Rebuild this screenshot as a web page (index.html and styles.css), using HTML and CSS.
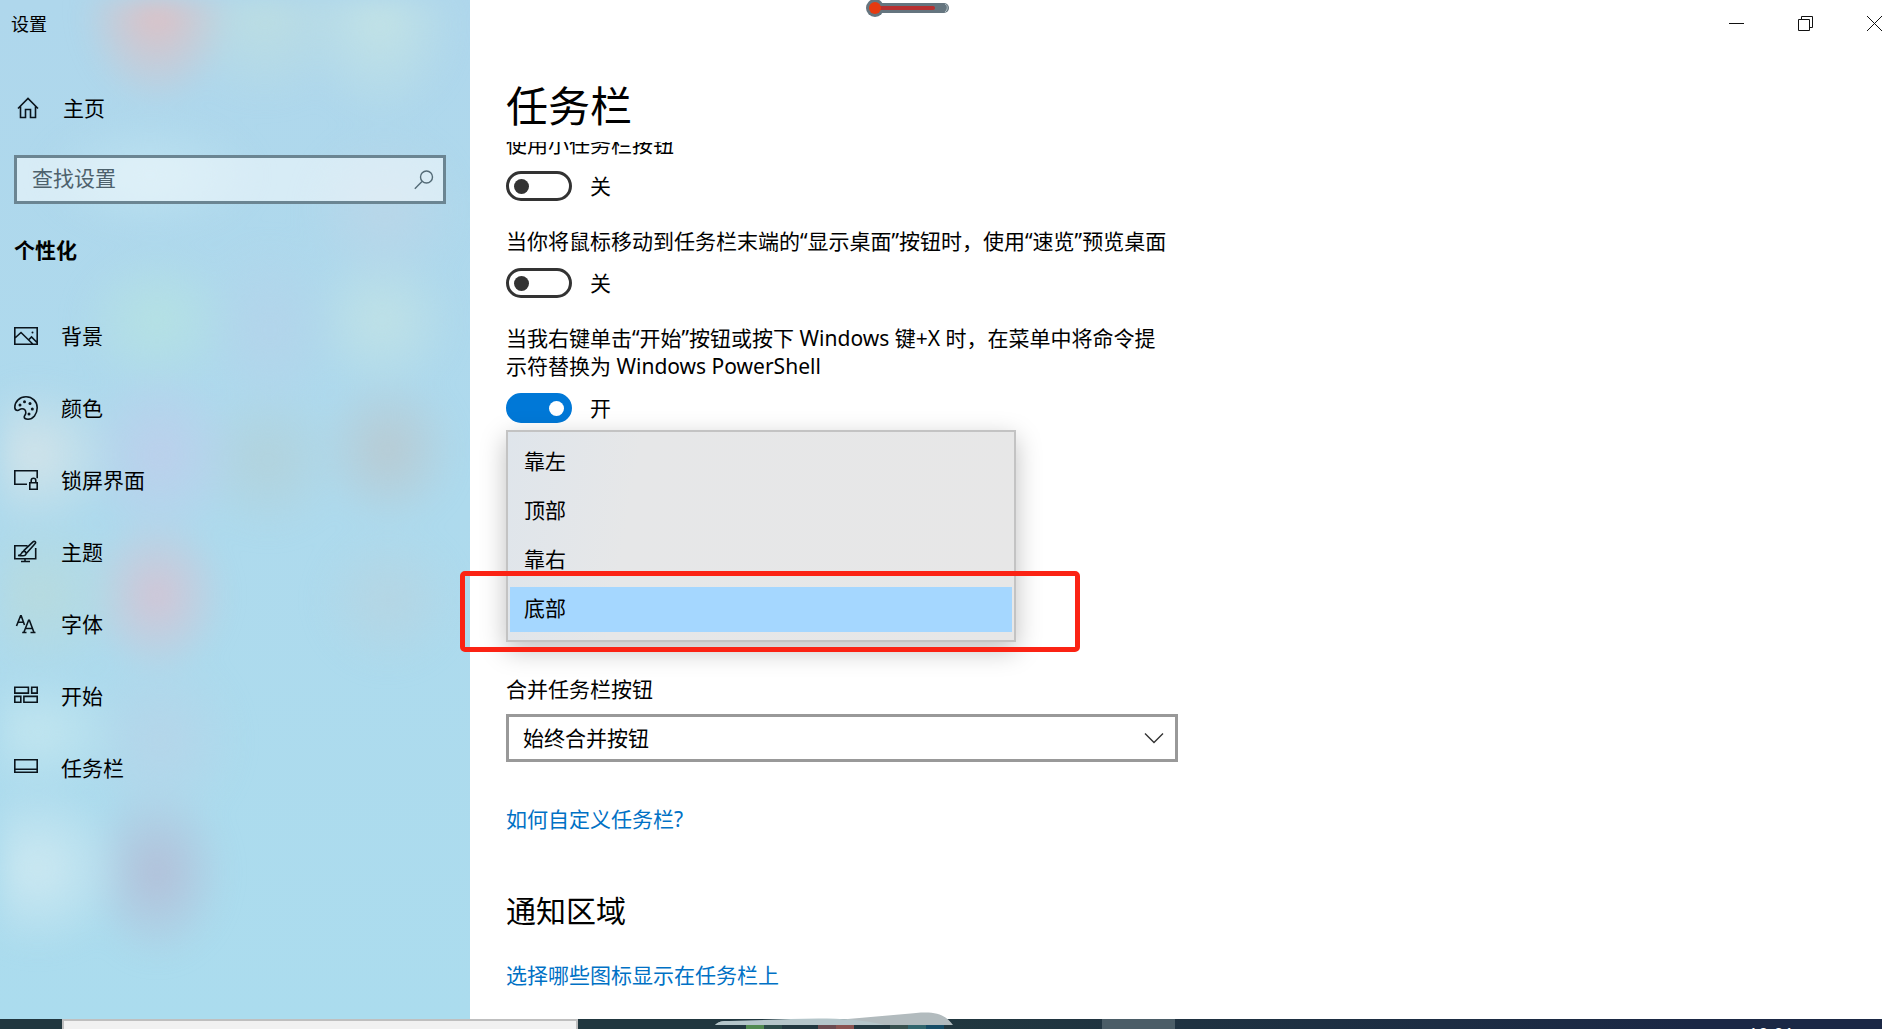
FILE: index.html
```html
<!DOCTYPE html>
<html lang="zh-CN">
  <head>
    <meta charset="UTF-8" />
    <meta name="viewport" content="width=device-width, initial-scale=1.0" />
    <title>设置</title>
    <link rel="stylesheet" href="styles.css">
  </head>
  <body>
    <div class="window">
      <aside class="sidebar">
        <div class="app-title">设置</div>
        <a class="home" href="#">
          <svg width="22" height="22" viewBox="0 0 22 22"><path d="M1 11.5 11 1.5l10 10M3.5 9.5v11h5v-8h5v8h5v-11" /></svg>
          主页
        </a>

        <div class="search">
          <input type="text" placeholder="查找设置" aria-label="查找设置" />
          <svg class="search-icon" width="20" height="20" viewBox="0 0 20 20"><circle cx="12.5" cy="7" r="6" /><path d="M8 11.5.8 18.8" /></svg>
        </div>

        <h2>个性化</h2>

        <nav class="nav">
          <a href="#">
            <svg width="24" height="24" viewBox="0 0 24 24"><path d="M.8 3.8h22.4v16.4H.8zM1 14l6-5.5 12 11.7M14.5 16l3-3 5.5 5.5" /><circle class="dot" cx="18.5" cy="8.5" r="1" /></svg>
            背景
          </a>
          <a href="#">
            <svg width="24" height="24" viewBox="0 0 24 24"><path d="M12 .8c6.300 0 11.200 4.700 11.200 11 0 6.500-4.200 11.400-9.200 11.400-2.200 0-3.800-.8-3.800-2.200 0-1.500 1.600-2.200 1.600-4.300 0-2.400-1.500-3.900-3.800-3.900-2.300 0-2.600 1.700-4.400 1.700-1.800 0-2.800-1.300-2.800-3.200C.8 5.500 5.700.8 12 .8z" /><circle class="dot" cx="6" cy="9" r="1.500" /><circle class="dot" cx="10.500" cy="5.800" r="1.500" /><circle class="dot" cx="16" cy="7.500" r="1.500" /><circle class="dot" cx="18.300" cy="13" r="1.500" /><circle class="dot" cx="15" cy="18" r="1.500" /></svg>
            颜色
          </a>
          <a href="#">
            <svg width="24" height="24" viewBox="0 0 24 24"><path d="M13 16.200H.8V2.800h22.400v7.500M15.800 14.800h7.400v6.400h-7.400zM17.200 14.800v-2.300c0-3 4.600-3 4.600 0v2.300" /></svg>
            锁屏界面
          </a>
          <a href="#">
            <svg width="24" height="24" viewBox="0 0 24 24"><path d="M13.500 5.800H.8v12.900h20.900V8M11 18.700V21M7 21.500h9M4 15.500c3 0 3-1 4-3 1-1.800 3.500-1.300 4 .3.400 2-1.200 3-3.500 2.900-1.500 0-2.500 0-4.500-.2zM9.500 10.800l9.500-9c1.500-1.400 3.300.3 2.200 1.800l-8.700 9.700" /></svg>
            主题
          </a>
          <a href="#">
            <svg width="24" height="24" viewBox="0 0 24 24"><path d="M2.500 14 6.600 3.800h.6L10.500 13M4 10.200h5.400M8.200 20.500h4.300M16.500 20.500h5M9.800 20.500l4.800-12.200h.8l4.600 12.200M11.500 16.500h6.700" /></svg>
            字体
          </a>
          <a href="#">
            <svg width="24" height="24" viewBox="0 0 24 24"><path d="M.8 3.200h13.600v5.900H.8zM17.700 3.200h5.500v5.900h-5.500zM.8 12.400h6v5.900h-6zM9.900 12.400h13.300v5.900H9.900z" /></svg>
            开始
          </a>
          <a href="#">
            <svg width="24" height="24" viewBox="0 0 24 24"><path d="M.8 3.800h22.400v12.400H.8zM1 13.200h22" /></svg>
            任务栏
          </a>
        </nav>
      </aside>

      <main class="main">
        <header class="page-header">
          <div class="window-controls">
            <button type="button" aria-label="最小化"><svg width="15" height="15" viewBox="0 0 15 15"><path d="M0 7.500h15" /></svg></button>
            <button type="button" aria-label="还原"><svg width="15" height="15" viewBox="0 0 15 15"><path d="M.5 3.500h11v11H.5zM3.500 3.500v-3h11v11h-3" /></svg></button>
            <button type="button" aria-label="关闭"><svg width="15" height="15" viewBox="0 0 15 15"><path d="m0 0 15 15M15 0 0 15" /></svg></button>
          </div>
          <h1>任务栏</h1>
        </header>

        <div class="content">
          <div class="setting">
            <label for="small-buttons">使用小任务栏按钮</label>
            <div class="toggle-row"><input type="checkbox" class="toggle" id="small-buttons" /><span>关</span></div>
          </div>
          <div class="setting">
            <label for="peek">当你将鼠标移动到任务栏末端的“显示桌面”按钮时，使用“速览”预览桌面</label>
            <div class="toggle-row"><input type="checkbox" class="toggle" id="peek" /><span>关</span></div>
          </div>
          <div class="setting">
            <label for="powershell">当我右键单击“开始”按钮或按下 Windows 键+X 时，在菜单中将命令提示符替换为 Windows PowerShell</label>
            <div class="toggle-row"><input type="checkbox" class="toggle" id="powershell" checked /><span>开</span></div>
          </div>

          <div class="position-menu" role="listbox">
            <button type="button" role="option">靠左</button>
            <button type="button" role="option">顶部</button>
            <button type="button" role="option">靠右</button>
            <button type="button" role="option" class="selected" aria-selected="true">底部</button>
            <div class="highlight"></div>
          </div>

          <label class="combine-label" for="combine">合并任务栏按钮</label>
          <div class="select-wrap">
            <select id="combine">
              <option>始终合并按钮</option>
            </select>
            <svg class="chevron" width="20" height="12" viewBox="0 0 20 12"><path d="m1 1.500 9 9 9-9" /></svg>
          </div>

          <a class="link" href="#">如何自定义任务栏?</a>
          <h2>通知区域</h2>
          <a class="link" href="#">选择哪些图标显示在任务栏上</a>
        </div>
      </main>
    </div>

    <footer class="taskbar">
      <div class="taskbar-search"></div>
      <div class="taskbar-apps">
        <i class="app green"></i>
        <i class="app red"></i>
        <i class="app teal"></i>
      </div>
      <div class="taskbar-active"></div>
      <time class="clock">10:01</time>
    </footer>

    <!-- desktop widgets floating over everything -->
    <svg class="thermometer" width="84" height="18" viewBox="0 0 84 18">
      <rect x="8" y="3" width="75" height="10" rx="5" fill="#65757f" />
      <circle cx="9" cy="8" r="9" fill="#65757f" />
      <path d="M10 6h57a2 2 0 0 1 0 4H10z" fill="#b83030" />
      <circle cx="9" cy="8" r="6" fill="#e63a10" />
      <path d="M79 4c3 1 3 6 0 8" fill="none" stroke="#b5c4c8" />
    </svg>
    <svg class="swoosh" width="238" height="13" viewBox="0 0 238 13">
      <path d="M0 13c4-4 8-4 14-4h96l80-7c25-3 38-3 48 11z" fill="#b2bbbe" />
      <path d="M0 13c4-4 8-4 14-4 60-1 110-7 156 4z" fill="#b5c6ca" />
    </svg>
  </body>
</html>
```
FILE: styles.css
```css
* {
  box-sizing: border-box;
}
body {
  margin: 0;
  height: 100vh;
  display: flex;
  flex-direction: column;
  overflow: hidden;
  position: relative;
  font-family: "Noto Sans", "Noto Sans CJK SC", sans-serif;
  font-size: 21px;
  line-height: 28px;
  color: #000;
  background-color: #fff;
}
h1,
h2 {
  margin: 0;
}
a {
  color: inherit;
  text-decoration: none;
}
button,
input,
select {
  font: inherit;
  color: inherit;
}
svg {
  flex: none;
}
.window {
  flex: 1;
  min-height: 0;
  display: flex;
}

/* Sidebar */
.sidebar {
  position: relative;
  z-index: 0;
  width: 470px;
  flex: none;
  padding: 10px 24px 0 14px;
  overflow: hidden;
  background: linear-gradient(#afd7ec, #aedaed 50%, #abdcee);
}
/* acrylic: desktop icons blurred behind the panel */
.sidebar::before {
  content: "";
  position: absolute;
  z-index: -1;
  inset: 0;
  filter: blur(12px);
  background:
    radial-gradient(ellipse 75px 95px at 157px 10px, #e0bfc2, #e0bfc200),
    radial-gradient(ellipse 90px 90px at 265px 15px, #bcdde2, #bcdde200),
    radial-gradient(ellipse 80px 100px at 380px 20px, #c2e2e5, #c2e2e500),
    radial-gradient(ellipse 110px 60px at 150px 175px, #bce1f0, #bce1f000),
    radial-gradient(ellipse 80px 80px at 385px 210px, #b9d6e8, #b9d6e800),
    radial-gradient(ellipse 80px 70px at 157px 320px, #b5e1e3, #b5e1e300),
    radial-gradient(ellipse 70px 90px at 270px 330px, #b3d4ea, #b3d4ea00),
    radial-gradient(ellipse 75px 75px at 382px 320px, #bfe1e6, #bfe1e600),
    radial-gradient(ellipse 85px 75px at 35px 455px, #d1e3e9, #d1e3e900),
    radial-gradient(ellipse 80px 90px at 160px 455px, #bccfeb, #bccfeb00),
    radial-gradient(ellipse 75px 75px at 268px 460px, #b2d2dc, #b2d2dc00),
    radial-gradient(ellipse 70px 75px at 388px 450px, #b8cad2, #b8cad200),
    radial-gradient(ellipse 90px 80px at 40px 595px, #b7dade, #b7dade00),
    radial-gradient(ellipse 70px 80px at 157px 595px, #d3c4d4, #d3c4d400),
    radial-gradient(ellipse 70px 70px at 388px 600px, #b5d5e3, #b5d5e300),
    radial-gradient(ellipse 90px 60px at 38px 732px, #c1e5ef, #c1e5ef00),
    radial-gradient(ellipse 80px 90px at 160px 740px, #b5d5e9, #b5d5e900),
    radial-gradient(ellipse 90px 85px at 38px 868px, #cce8f1, #cce8f100),
    radial-gradient(ellipse 70px 90px at 157px 872px, #b3bfd8, #b3bfd800);
}
.app-title {
  font-size: 18px;
  margin-left: -3px;
}
.home {
  display: flex;
  align-items: center;
  gap: 24px;
  height: 48px;
  margin: 46px 0 23px 3px;
}
.sidebar svg {
  fill: none;
  stroke: #0a141c;
  stroke-width: 1.6;
}
.sidebar .dot {
  fill: #0a141c;
  stroke: none;
}
.search {
  position: relative;
}
.search input {
  display: block;
  width: 100%;
  height: 49px;
  padding: 0 50px 4px 15px;
  border: 3px solid #6b8592;
  border-radius: 0;
  background-color: rgba(255, 255, 255, 0.5);
  outline: none;
}
.search input::placeholder {
  color: #4d616c;
  opacity: 1;
}
.search .search-icon {
  position: absolute;
  right: 12px;
  top: 15px;
  stroke: #536a76;
  stroke-width: 1.4;
}
.sidebar h2 {
  margin-top: 32px;
  font-size: 21px;
  line-height: 28px;
}
.nav {
  margin-top: 36px;
}
.nav a {
  display: flex;
  align-items: center;
  gap: 23px;
  height: 72px;
}

/* Main page */
.main {
  flex: 1;
  min-width: 0;
  position: relative;
  z-index: 1;
}
.page-header {
  position: relative;
  z-index: 1;
  height: 142px;
  padding-left: 36px;
  background-color: #fff;
}
.window-controls {
  display: flex;
  justify-content: flex-end;
  height: 47px;
  margin-right: -27px;
}
.window-controls button {
  display: flex;
  align-items: center;
  justify-content: center;
  width: 69px;
  padding: 0;
  border: none;
  background: none;
}
.window-controls svg {
  fill: none;
  stroke: #111;
}
h1 {
  margin-top: 31px;
  font-size: 42px;
  font-weight: 400;
  line-height: 56px;
}
.content {
  max-width: 708px;
  margin-top: -12px;
  padding-left: 36px;
}
.setting {
  margin-bottom: 26px;
}
.setting label {
  display: block;
  max-width: 668px;
}
.toggle-row {
  display: flex;
  align-items: center;
  gap: 18px;
  height: 30px;
  margin-top: 13px;
}
.toggle {
  appearance: none;
  display: flex;
  align-items: center;
  width: 66px;
  height: 30px;
  margin: 0;
  padding: 0 5px;
  border: 3px solid #333;
  border-radius: 15px;
}
.toggle::before {
  content: "";
  width: 15px;
  height: 15px;
  border-radius: 50%;
  background-color: #333;
}
.toggle:checked {
  justify-content: flex-end;
  border-color: #0078d7;
  background-color: #0078d7;
}
.toggle:checked::before {
  background-color: #fff;
}

.position-menu {
  position: relative;
  display: flex;
  flex-direction: column;
  gap: 4px;
  width: 510px;
  margin-top: -19px;
  padding: 8px 2px;
  border: 2px solid #c3c3c3;
  background: linear-gradient(100deg, #dfe5eb, #e6e7e8 25%, #e7e7e7);
  box-shadow: 0 8px 24px rgba(0, 0, 0, 0.25);
}
.position-menu button {
  height: 45px;
  padding: 0 14px 3px;
  border: none;
  background: none;
  text-align: left;
}
.position-menu .selected {
  background-color: #a5d7ff;
}
.highlight {
  position: absolute;
  left: -48px;
  right: -66px;
  bottom: -12px;
  height: 81px;
  border: 5px solid #fb2314;
  border-radius: 5px;
}

.combine-label {
  display: block;
  margin-top: 33px;
}
.select-wrap {
  position: relative;
  margin-top: 11px;
}
.select-wrap select {
  appearance: none;
  display: block;
  width: 100%;
  height: 48px;
  padding: 0 48px 0 14px;
  border: 3px solid #999;
  border-radius: 0;
  background-color: #fff;
}
.chevron {
  position: absolute;
  right: 14px;
  top: 18px;
  fill: none;
  stroke: #333;
  stroke-width: 1.4;
  pointer-events: none;
}
.link {
  display: block;
  margin-top: 43px;
  color: #0071c5;
}
.content h2 {
  margin-top: 58px;
  font-size: 30px;
  font-weight: 400;
  line-height: 40px;
}
.content h2 + .link {
  margin-top: 30px;
}

/* Taskbar */
.taskbar {
  flex: none;
  display: flex;
  height: 10px;
  padding-left: 62px;
  overflow: hidden;
  background: linear-gradient(90deg, #21373f 50%, #1b2845 90%);
}
.taskbar-search {
  width: 516px;
  border: 2px solid #bfbfbf;
  border-bottom: none;
  background-color: #f1f1f1;
}
.taskbar-apps {
  display: flex;
  gap: 36px;
  width: 524px;
  padding: 6px 0 0 168px;
}
.app {
  width: 36px;
}
.green {
  background: linear-gradient(90deg, #518a50 50%, #2b4b49 50%);
}
.red {
  background: linear-gradient(90deg, #6b4b50 50%, #8a5350 50%);
}
.teal {
  width: 54px;
  background: linear-gradient(90deg, #38514f 33%, #31656d 33% 66%, #164c66 66%);
}
.taskbar-active {
  width: 73px;
  background-color: #4b5d67;
}
.clock {
  margin: 4px 88px 0 auto;
  font-size: 18px;
  line-height: 22px;
  color: #fff;
}

.thermometer {
  position: absolute;
  z-index: 2;
  left: 46%;
  top: 0;
}
.swoosh {
  position: absolute;
  z-index: 2;
  left: 38%;
  bottom: 4px;
}
```
